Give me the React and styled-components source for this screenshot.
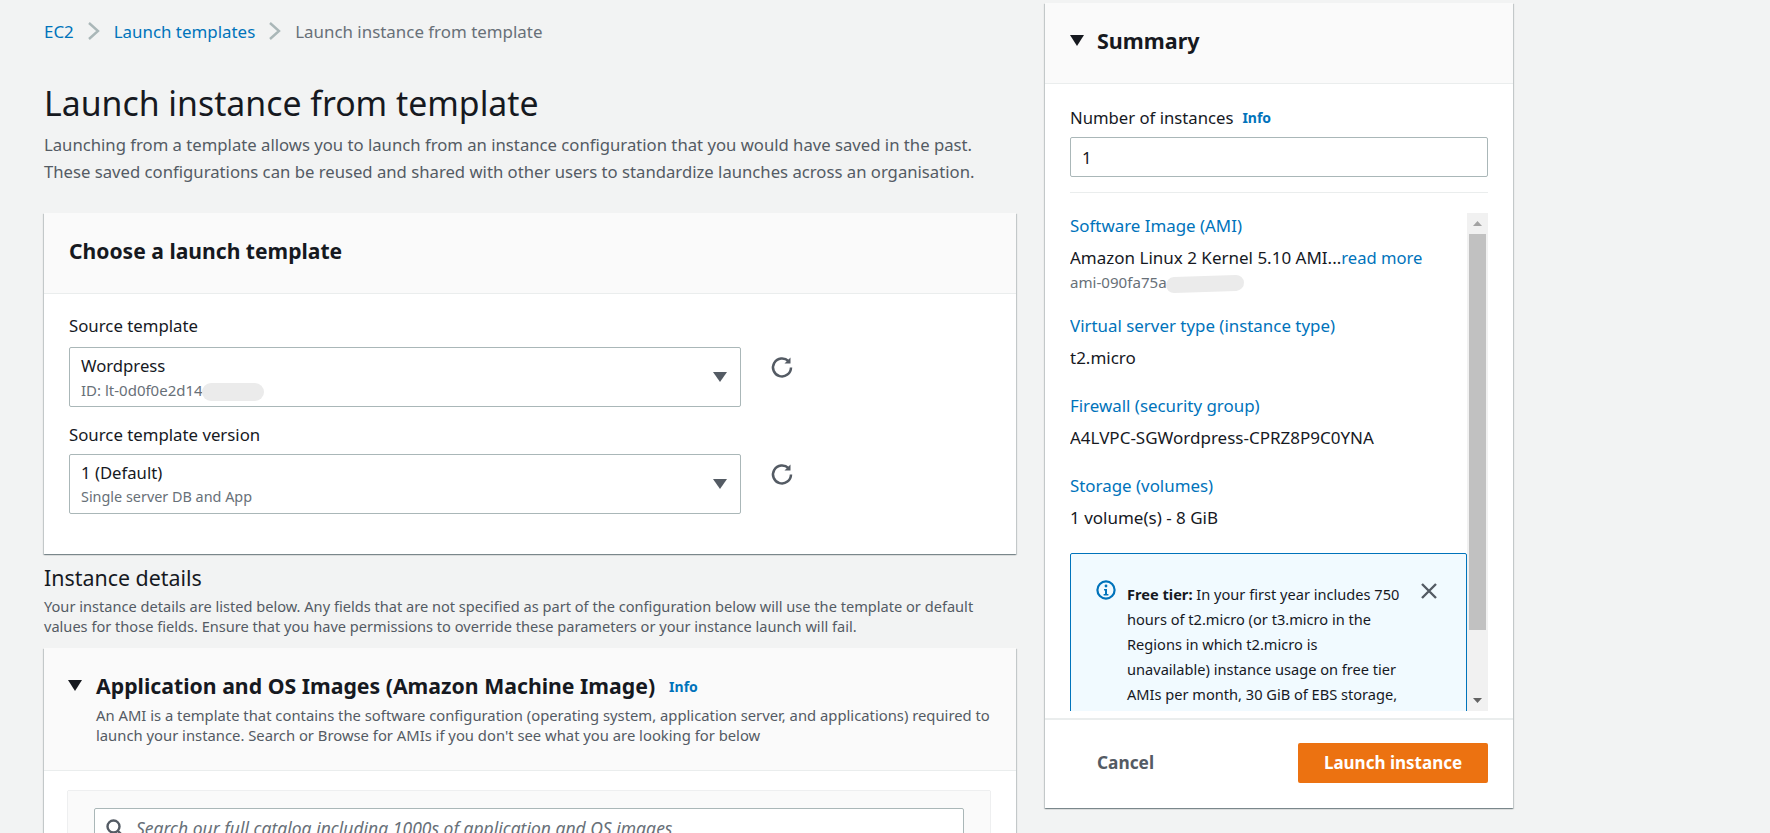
import React from "react";
import styled, { createGlobalStyle } from "styled-components";

const Global = createGlobalStyle`
  html, body { margin: 0; padding: 0; height: 833px; overflow: hidden; background: #f2f3f3; }
  body { font-family: "Noto Sans", "Open Sans", sans-serif; color: #16191f; }
  * { box-sizing: border-box; }
`;

const Page = styled.div`
  display: flex;
  align-items: flex-start;
  height: 833px;
  overflow: hidden;
  padding: 3px 0 0 44px;
`;
const Main = styled.main`
  width: 972px;
  flex: none;
`;
const Crumbs = styled.nav`
  display: flex;
  align-items: center;
  height: 24px;
  margin-top: 16px;
  font-size: 16.9px;
  color: #687078;
`;
const CrumbLink = styled.a`
  color: #0073bb;
`;
const Chevron = styled.svg`
  width: 18px;
  height: 20px;
  margin: 0 11px;
  fill: none;
  stroke: #aab7b8;
  stroke-width: 2.4;
`;
const Title = styled.h1`
  margin: 38px 0 0;
  font-size: 33.8px;
  line-height: 44px;
  font-weight: 400;
`;
const Lead = styled.p`
  margin: 7px 0 0;
  font-size: 16.7px;
  line-height: 26.5px;
  color: #545b64;
  white-space: nowrap;
`;
const Card = styled.section`
  background: #fff;
  box-shadow: 0 1px 1px 0 rgba(0, 28, 36, 0.3), 1px 1px 1px 0 rgba(0, 28, 36, 0.15), -1px 1px 1px 0 rgba(0, 28, 36, 0.15);
  margin-top: ${(p) => p.$top || 0}px;
`;
const CardHead = styled.header`
  display: flex;
  align-items: center;
  height: 81px;
  padding: 0 0 6px 25px;
  background: #fafafa;
  border-bottom: 1px solid #eaeded;
`;
const CardTitle = styled.h2`
  margin: 0;
  font-size: 21.1px;
  font-weight: 700;
`;
const CardBody = styled.div`
  padding: 20px 26px 40px 25px;
`;
const FieldLabel = styled.label`
  display: block;
  font-size: 16.8px;
  line-height: 24px;
  color: #16191f;
  margin-bottom: ${(p) => p.$gap}px;
`;
const SelectRow = styled.div`
  display: flex;
  align-items: flex-start;
  margin-bottom: 16px;
  &:last-child { margin-bottom: 0; }
`;
const Select = styled.div`
  position: relative;
  width: 672px;
  height: 60px;
  padding: 6px 11px;
  background: #fff;
  border: 1px solid #aab7b8;
  border-radius: 2px;
`;
const SelectValue = styled.div`
  font-size: 16.7px;
  line-height: 24px;
`;
const SelectSub = styled.div`
  font-size: ${(p) => p.$size}px;
  line-height: 24px;
  color: #687078;
  white-space: nowrap;
`;
const Caret = styled.svg`
  position: absolute;
  right: 13px;
  top: 24px;
  width: 14px;
  height: 10px;
  fill: #545b64;
`;
const Refresh = styled.svg`
  width: 24px;
  height: 24px;
  margin: 8px 0 0 29px;
  fill: none;
  stroke: #545b64;
  stroke-width: 2.5;
`;
const Blur = styled.span`
  display: inline-block;
  vertical-align: middle;
  width: ${(p) => p.$w}px;
  height: ${(p) => p.$h}px;
  background: #ebebeb;
  border-radius: 9px;
  margin-left: -1px;
  transform: rotate(${(p) => p.$tilt || 0}deg);
`;
const SectionHead = styled.h2`
  margin: 9px 0 0;
  font-size: 21.4px;
  line-height: 30px;
  font-weight: 400;
`;
const SectionDesc = styled.p`
  margin: 3px 0 0;
  font-size: 14.6px;
  line-height: 20px;
  color: #545b64;
`;
const AmiHead = styled.header`
  height: 123px;
  padding: 21px 26px 0 24px;
  background: #fafafa;
  border-bottom: 1px solid #eaeded;
`;
const AmiTitleRow = styled.div`
  display: flex;
  align-items: center;
  height: 32px;
  margin-bottom: 4px;
`;
const Tri = styled.svg`
  width: 14px;
  height: 11px;
  fill: #16191f;
  flex: none;
  margin-right: ${(p) => p.$gap}px;
`;
const AmiTitle = styled.h2`
  margin: 0;
  font-size: 21.25px;
  font-weight: 700;
`;
const InfoLink = styled.a`
  margin: ${(p) => p.$drop || 0}px 0 0 ${(p) => p.$left}px;
  font-size: 14px;
  font-weight: 700;
  color: #0073bb;
`;
const AmiDesc = styled.p`
  margin: 0 0 0 28px;
  font-size: 14.8px;
  line-height: 20px;
  color: #545b64;
`;
const AmiBody = styled.div`
  padding: 20px 26px 0 24px;
`;
const InnerCard = styled.div`
  background: #fafafa;
  box-shadow: 0 0 1px rgba(0, 28, 36, 0.4);
  padding: 17px 26px 60px;
`;
const SearchBox = styled.div`
  display: flex;
  align-items: center;
  height: 40px;
  background: #fff;
  border: 1px solid #aab7b8;
  border-radius: 2px;
  padding-left: 10px;
  gap: 11px;
  font-size: 17.5px;
  font-style: italic;
  color: #687078;
`;
const SearchIcon = styled.svg`
  width: 20px;
  height: 20px;
  fill: none;
  stroke: #545b64;
  stroke-width: 2.4;
  flex: none;
`;

const Panel = styled.aside`
  width: 468px;
  flex: none;
  margin-left: 29px;
  height: 805px;
  display: flex;
  flex-direction: column;
  background: #fff;
  box-shadow: 0 1px 1px 0 rgba(0, 28, 36, 0.3), 1px 1px 1px 0 rgba(0, 28, 36, 0.15), -1px 1px 1px 0 rgba(0, 28, 36, 0.15);
`;
const PanelHead = styled.header`
  flex: none;
  display: flex;
  align-items: center;
  height: 81px;
  padding: 0 0 5px 25px;
  background: #fafafa;
  border-bottom: 1px solid #eaeded;
`;
const PanelTitle = styled.h2`
  margin: 0;
  font-size: 21.5px;
  font-weight: 700;
`;
const PanelBody = styled.div`
  flex: none;
  padding: 21px 25px 0;
`;
const LabelRow = styled.div`
  display: flex;
  align-items: center;
  height: 24px;
  font-size: 16.7px;
`;
const NumberInput = styled.div`
  height: 40px;
  margin-top: 8px;
  padding: 0 11px;
  display: flex;
  align-items: center;
  border: 1px solid #aab7b8;
  border-radius: 2px;
  font-size: 16.7px;
`;
const Rule = styled.hr`
  margin: 15px 0 20px;
  border: 0;
  border-top: 1px solid #eaeded;
`;
const Scroller = styled.div`
  display: flex;
  height: 498px;
  overflow: hidden;
`;
const ScrollContent = styled.div`
  flex: 1;
  min-width: 0;
`;
const Group = styled.div`
  margin-bottom: ${(p) => p.$mb}px;
`;
const DtLink = styled.a`
  display: block;
  font-size: 16.9px;
  line-height: 26px;
  color: #0073bb;
`;
const DdText = styled.div`
  margin-top: 6px;
  font-size: 17px;
  line-height: 26px;
  color: #16191f;
  white-space: nowrap;
`;
const ReadMore = styled.span`
  font-size: 16.6px;
  color: #0073bb;
`;
const AmiId = styled.div`
  margin-top: 1px;
  font-size: 15.1px;
  line-height: 20px;
  color: #687078;
  white-space: nowrap;
`;
const Alert = styled.div`
  display: flex;
  padding: 26px 0 0 25px;
  height: 300px;
  background: #f1faff;
  border: 1px solid #0073bb;
  border-radius: 2px;
`;
const AlertIcon = styled.svg`
  width: 20px;
  height: 20px;
  flex: none;
  margin-right: 11px;
`;
const AlertText = styled.p`
  margin: 2px 0 0;
  width: 275px;
  font-size: 14.6px;
  line-height: 25px;
  color: #16191f;
`;
const AlertClose = styled.svg`
  width: 18px;
  height: 18px;
  flex: none;
  margin: 2px 0 0 18px;
  fill: none;
  stroke: #545b64;
  stroke-width: 2.4;
`;
const Track = styled.div`
  width: 21px;
  flex: none;
  display: flex;
  flex-direction: column;
  align-items: center;
  background: #f1f1f1;
`;
const ScrollBtn = styled.svg`
  width: 21px;
  height: 21px;
  flex: none;
  fill: ${(p) => p.$tone};
`;
const Thumb = styled.div`
  width: 17px;
  height: 396px;
  flex: none;
  background: #c1c1c1;
`;
const Spacer = styled.div`
  flex: 1;
`;
const PanelFoot = styled.footer`
  flex: 1;
  margin-top: 7px;
  display: flex;
  align-items: center;
  justify-content: space-between;
  padding: 0 25px 2px 52px;
  border-top: 2px solid #eaeded;
`;
const Cancel = styled.span`
  font-size: 17.3px;
  font-weight: 700;
  color: #545b64;
  margin-bottom: 2px;
`;
const Launch = styled.button`
  width: 190px;
  height: 40px;
  padding: 0 0 2px;
  border: 0;
  border-radius: 2px;
  background: #ec7211;
  color: #fff;
  font: 700 17px "Noto Sans", sans-serif;
`;

const Chev = () => (
  <Chevron viewBox="0 0 18 20"><path d="M4 2l9 8-9 8" /></Chevron>
);
const Reload = () => (
  <Refresh viewBox="0 0 24 24">
    <path d="M18.5 6.2A9 9 0 1 0 21 12.5" />
    <path d="M20.5 2.5v6h-6" fill="#545b64" stroke="none" />
  </Refresh>
);
const SelectCaret = () => (
  <Caret viewBox="0 0 14 10"><path d="M0 0h14L7 10z" /></Caret>
);

export default function App() {
  return (
    <Page>
      <Global />
      <Main>
        <Crumbs>
          <CrumbLink>EC2</CrumbLink>
          <Chev />
          <CrumbLink>Launch templates</CrumbLink>
          <Chev />
          <span>Launch instance from template</span>
        </Crumbs>
        <Title>Launch instance from template</Title>
        <Lead>
          Launching from a template allows you to launch from an instance configuration that you would have saved in the past.
          <br />
          These saved configurations can be reused and shared with other users to standardize launches across an organisation.
        </Lead>
        <Card $top={28}>
          <CardHead><CardTitle>Choose a launch template</CardTitle></CardHead>
          <CardBody>
            <FieldLabel $gap={9}>Source template</FieldLabel>
            <SelectRow>
              <Select>
                <SelectValue>Wordpress</SelectValue>
                <SelectSub $size={15}>ID: lt-0d0f0e2d14<Blur $w={62} $h={18} /></SelectSub>
                <SelectCaret />
              </Select>
              <Reload />
            </SelectRow>
            <FieldLabel $gap={7}>Source template version</FieldLabel>
            <SelectRow>
              <Select>
                <SelectValue>1 (Default)</SelectValue>
                <SelectSub $size={14.4}>Single server DB and App</SelectSub>
                <SelectCaret />
              </Select>
              <Reload />
            </SelectRow>
          </CardBody>
        </Card>
        <SectionHead>Instance details</SectionHead>
        <SectionDesc>
          Your instance details are listed below. Any fields that are not specified as part of the configuration below will use the template or default values for those fields. Ensure that you have permissions to override these parameters or your instance launch will fail.
        </SectionDesc>
        <Card $top={12}>
          <AmiHead>
            <AmiTitleRow>
              <Tri viewBox="0 0 14 11" $gap={14}><path d="M0 0h14L7 11z" /></Tri>
              <AmiTitle>Application and OS Images (Amazon Machine Image)</AmiTitle>
              <InfoLink $left={14} $drop={3}>Info</InfoLink>
            </AmiTitleRow>
            <AmiDesc>
              An AMI is a template that contains the software configuration (operating system, application server, and applications) required to launch your instance. Search or Browse for AMIs if you don't see what you are looking for below
            </AmiDesc>
          </AmiHead>
          <AmiBody>
            <InnerCard>
              <SearchBox>
                <SearchIcon viewBox="0 0 20 20"><circle cx="8.5" cy="8.5" r="6" /><path d="M13 13l5 5" /></SearchIcon>
                Search our full catalog including 1000s of application and OS images
              </SearchBox>
            </InnerCard>
          </AmiBody>
        </Card>
      </Main>
      <Panel>
        <PanelHead>
          <Tri viewBox="0 0 14 11" $gap={13}><path d="M0 0h14L7 11z" /></Tri>
          <PanelTitle>Summary</PanelTitle>
        </PanelHead>
        <PanelBody>
          <LabelRow>
            Number of instances
            <InfoLink $left={9}>Info</InfoLink>
          </LabelRow>
          <NumberInput>1</NumberInput>
          <Rule />
          <Scroller>
            <ScrollContent>
              <Group $mb={21}>
                <DtLink>Software Image (AMI)</DtLink>
                <DdText>Amazon Linux 2 Kernel 5.10 AMI...<ReadMore>read more</ReadMore></DdText>
                <AmiId>ami-090fa75a<Blur $w={78} $h={16} $tilt={-2} /></AmiId>
              </Group>
              <Group $mb={22}>
                <DtLink>Virtual server type (instance type)</DtLink>
                <DdText>t2.micro</DdText>
              </Group>
              <Group $mb={22}>
                <DtLink>Firewall (security group)</DtLink>
                <DdText>A4LVPC-SGWordpress-CPRZ8P9C0YNA</DdText>
              </Group>
              <Group $mb={22}>
                <DtLink>Storage (volumes)</DtLink>
                <DdText>1 volume(s) - 8 GiB</DdText>
              </Group>
              <Alert>
                <AlertIcon viewBox="0 0 20 20">
                  <circle cx="10" cy="10" r="8.6" fill="none" stroke="#0073bb" strokeWidth="2.2" />
                  <circle cx="10" cy="6" r="1.4" fill="#0073bb" />
                  <path d="M8 9h3v5h1.4v1.6H7.6V14H9v-3.4H8z" fill="#0073bb" />
                </AlertIcon>
                <AlertText>
                  <b>Free tier:</b> In your first year includes 750 hours of t2.micro (or t3.micro in the Regions in which t2.micro is unavailable) instance usage on free tier AMIs per month, 30 GiB of EBS storage, 2 million IOs, 1 GB of snapshots, and 100 GB of bandwidth to the internet.
                </AlertText>
                <AlertClose viewBox="0 0 18 18"><path d="M2 2l14 14M16 2L2 16" /></AlertClose>
              </Alert>
            </ScrollContent>
            <Track>
              <ScrollBtn $tone="#a3a3a3" viewBox="0 0 21 21"><path d="M6 13l4.500-5 4.500 5z" /></ScrollBtn>
              <Thumb />
              <Spacer />
              <ScrollBtn $tone="#636363" viewBox="0 0 21 21"><path d="M6 8l4.500 5 4.500-5z" /></ScrollBtn>
            </Track>
          </Scroller>
        </PanelBody>
        <PanelFoot>
          <Cancel>Cancel</Cancel>
          <Launch>Launch instance</Launch>
        </PanelFoot>
      </Panel>
    </Page>
  );
}
